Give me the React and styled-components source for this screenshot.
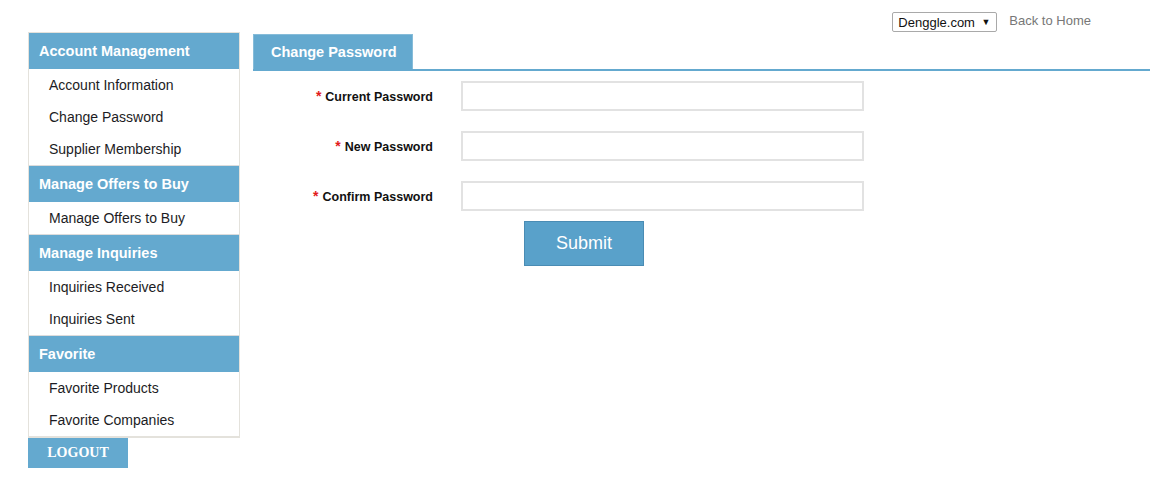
import React from "react";
import styled, { createGlobalStyle } from "styled-components";

const GlobalStyle = createGlobalStyle`
  body {
    margin: 0;
    background: #ffffff;
    font-family: "Liberation Sans", Arial, sans-serif;
  }
`;

const Page = styled.div`
  width: 1166px;
  min-height: 497px;
`;

const TopBar = styled.div`
  height: 32px;
  display: flex;
  justify-content: flex-end;
  align-items: flex-start;
  padding: 12px 75px 0 0;
  box-sizing: border-box;
  gap: 12px;
`;

const SiteSelect = styled.div`
  width: 105px;
  height: 20px;
  box-sizing: border-box;
  border: 1px solid #a9a9a9;
  border-radius: 2px;
  display: flex;
  align-items: center;
  justify-content: space-between;
  padding: 0 6px 0 5px;
  font-size: 13px;
  color: #111;
  span.arrow {
    font-size: 9px;
  }
`;

const HomeLink = styled.a`
  font-size: 13px;
  color: #777;
  text-decoration: none;
  line-height: 17px;
`;

const Main = styled.div`
  display: flex;
  align-items: flex-start;
  padding-left: 28px;
  gap: 13px;
`;

const SideColumn = styled.div`
  width: 212px;
  display: flex;
  flex-direction: column;
`;

const Sidebar = styled.nav`
  border: 1px solid #e4e2dc;
  border-bottom-width: 2px;
  background: #fff;
`;

const GroupTitle = styled.div`
  height: 36px;
  background: #64a9cf;
  color: #fff;
  font-weight: bold;
  font-size: 14.5px;
  display: flex;
  align-items: center;
  padding-left: 10px;
`;

const GroupItems = styled.ul`
  list-style: none;
  margin: 0;
  padding: 0;
  border-bottom: ${(p) => (p.last ? "none" : "1px solid #dcdcdc")};
`;

const Item = styled.li`
  height: 32px;
  display: flex;
  align-items: center;
  padding-left: 20px;
  font-size: 14px;
  color: #1c1c24;
`;

const Logout = styled.button`
  width: 100px;
  height: 30px;
  border: none;
  background: #64a9cf;
  color: #fff;
  font-family: "Liberation Serif", "Times New Roman", serif;
  font-weight: bold;
  font-size: 14px;
  padding: 0;
`;

const Content = styled.section`
  width: 897px;
`;

const Tabs = styled.div`
  display: flex;
  border-bottom: 2px solid #64a9cf;
  margin-top: 2px;
`;

const Tab = styled.div`
  width: 160px;
  height: 35px;
  box-sizing: border-box;
  background: #64a9cf;
  border: 1px solid #86bcd9;
  border-bottom: none;
  color: #fff;
  font-weight: bold;
  font-size: 14.5px;
  display: flex;
  align-items: center;
  padding-left: 17px;
`;

const Form = styled.form`
  padding-top: 10px;
  display: flex;
  flex-direction: column;
  gap: 20px;
`;

const Row = styled.div`
  display: flex;
  align-items: center;
  gap: 28px;
`;

const Label = styled.label`
  width: 180px;
  text-align: right;
  font-weight: bold;
  font-size: 12.5px;
  color: #111;
  span {
    color: #e21b1b;
    font-size: 14px;
    margin-right: 4px;
  }
`;

const Input = styled.input`
  width: 403px;
  height: 30px;
  box-sizing: border-box;
  border: 2px solid #e2e2e2;
  outline: none;
  padding: 0 6px;
`;

const Actions = styled.div`
  padding-left: 271px;
  margin-top: -10px;
`;

const SubmitButton = styled.button`
  width: 120px;
  height: 45px;
  background: #59a1ca;
  border: 1px solid #4a8cb4;
  color: #fff;
  font-family: "Liberation Sans", Arial, sans-serif;
  font-size: 18px;
`;

const menu = [
  {
    title: "Account Management",
    items: ["Account Information", "Change Password", "Supplier Membership"],
  },
  { title: "Manage Offers to Buy", items: ["Manage Offers to Buy"] },
  { title: "Manage Inquiries", items: ["Inquiries Received", "Inquiries Sent"] },
  { title: "Favorite", items: ["Favorite Products", "Favorite Companies"] },
];

const fields = ["Current Password", "New Password", "Confirm Password"];

export default function App() {
  return (
    <Page>
      <GlobalStyle />
      <TopBar>
        <SiteSelect>
          Denggle.com <span className="arrow">▼</span>
        </SiteSelect>
        <HomeLink href="#">Back to Home</HomeLink>
      </TopBar>
      <Main>
        <SideColumn>
          <Sidebar>
            {menu.map((group, i) => (
              <div key={group.title}>
                <GroupTitle>{group.title}</GroupTitle>
                <GroupItems last={i === menu.length - 1}>
                  {group.items.map((it) => (
                    <Item key={it}>{it}</Item>
                  ))}
                </GroupItems>
              </div>
            ))}
          </Sidebar>
          <Logout>LOGOUT</Logout>
        </SideColumn>
        <Content>
          <Tabs>
            <Tab>Change Password</Tab>
          </Tabs>
          <Form onSubmit={(e) => e.preventDefault()}>
            {fields.map((f) => (
              <Row key={f}>
                <Label>
                  <span>*</span>
                  {f}
                </Label>
                <Input type="password" />
              </Row>
            ))}
            <Actions>
              <SubmitButton type="submit">Submit</SubmitButton>
            </Actions>
          </Form>
        </Content>
      </Main>
    </Page>
  );
}
